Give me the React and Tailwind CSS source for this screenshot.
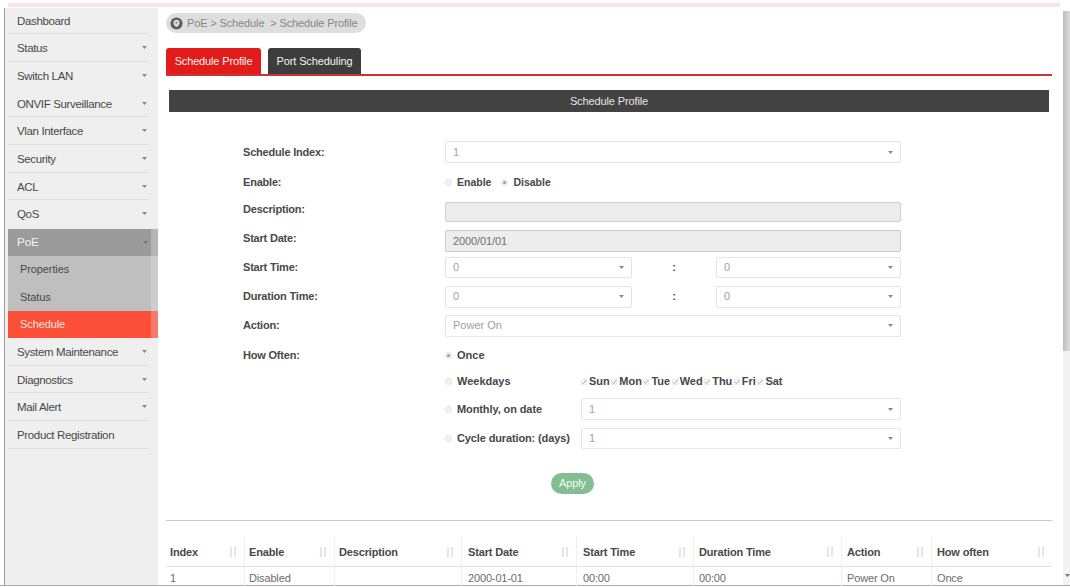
import React from "react";

const menu = [
  { label: "Dashboard", h: "h-[26px]", line: true },
  { label: "Status", h: "h-[28px]", caret: true, line: true },
  { label: "Switch LAN", h: "h-[28px]", caret: true },
  { label: "ONVIF Surveillance", h: "h-[27px]", caret: true, line: true },
  { label: "Vlan Interface", h: "h-[28px]", caret: true, line: true },
  { label: "Security", h: "h-[28px]", caret: true, line: true },
  { label: "ACL", h: "h-[27px]", caret: true, line: true },
  { label: "QoS", h: "h-[28px]", caret: true },
];

const menuAfter = [
  { label: "System Maintenance", h: "h-[28px]", caret: true, line: true },
  { label: "Diagnostics", h: "h-[27px]", caret: true, line: true },
  { label: "Mail Alert", h: "h-[28px]", caret: true, line: true },
  { label: "Product Registration", h: "h-[28px]", line: true },
];

const columns = [
  { label: "Index", value: "1", w: "w-[79px] pl-[4px]" },
  { label: "Enable", value: "Disabled", w: "w-[90px] pl-[4px]" },
  { label: "Description", value: "", w: "w-[127px] pl-[4px]" },
  { label: "Start Date", value: "2000-01-01", w: "w-[115px] pl-[6px]" },
  { label: "Start Time", value: "00:00", w: "w-[117px] pl-[6px]" },
  { label: "Duration Time", value: "00:00", w: "w-[148px] pl-[5px]" },
  { label: "Action", value: "Power On", w: "w-[90px] pl-[5px]" },
  { label: "How often", value: "Once", w: "w-[120px] pl-[5px]" },
];

function Caret({ className = "" }) {
  return (
    <svg className={`h-[3px] w-[5px] shrink-0 ${className}`} viewBox="0 0 5 3">
      <path d="M0 0h5L2.5 3z" fill="currentColor" />
    </svg>
  );
}

function MenuItem({ item }) {
  return (
    <div
      className={`mr-[9px] flex items-center justify-between border-b pl-[9px] pr-[2px] ${item.h} ${
        item.line ? "border-[#dedede]" : "border-transparent"
      }`}
    >
      <span className="pt-[3px] tracking-[-0.35px]">{item.label}</span>
      {item.caret && <Caret className="text-[#888]" />}
    </div>
  );
}

function Select({ value, className }) {
  return (
    <div
      className={`flex items-center justify-between rounded-[2px] border border-[#e4e4e4] bg-white pl-[7px] pr-[7px] text-[11px] text-[#a0a0a0] ${className}`}
    >
      <span>{value}</span>
      <Caret className="text-[#888]" />
    </div>
  );
}

function Radio({ checked }) {
  return (
    <span className="flex size-[7px] shrink-0 items-center justify-center rounded-full border border-[#e2e2e2] bg-[#f4f4f4]">
      {checked && <span className="size-[3px] rounded-full bg-[#999]" />}
    </span>
  );
}

function Check() {
  return (
    <svg className="size-[6px]" viewBox="0 0 6 6" fill="none">
      <rect x="0.5" y="0.5" width="5" height="5" stroke="#ececec" />
      <path d="M1 3.2l1.5 1.4L5.4 1" stroke="#999" strokeWidth="0.9" />
    </svg>
  );
}

function SortIcon() {
  return (
    <svg className="h-[10px] w-[8px] shrink-0" viewBox="0 0 8 10" fill="none" stroke="#cfcfcf">
      <path d="M2 0v9.500M0.800 8l1.200 1.500M6 10V0.500M6 0.500l1.300 1.500" />
    </svg>
  );
}

function Row({ label, h, labelClass = "", children }) {
  return (
    <div className={`flex items-center ${h}`}>
      <div className={`w-[202px] shrink-0 font-bold tracking-[-0.2px] ${labelClass}`}>{label}</div>
      <div className="flex w-[456px] items-center">{children}</div>
    </div>
  );
}

export default function App() {
  return (
    <div className="flex h-[587px] w-[1070px] flex-col overflow-hidden bg-white font-['Liberation_Sans',Arial,sans-serif] text-[11px] leading-none text-[#484848]">
      <div className="ml-[8px] mt-[3px] h-[4px] w-[1052px] shrink-0 bg-[#fce3e7]" />
      <div className="flex h-[579px] shrink-0 border-b border-[#aaa]">
        <aside className="ml-[4px] mt-[1px] w-[154px] shrink-0 border-l border-[#9a9a9a] bg-[#efefef] pl-[3px] text-[11.5px]">
          {menu.map((item) => (
            <MenuItem key={item.label} item={item} />
          ))}
          <div className="flex">
            <div className="flex-1">
              <div className="mt-px flex h-[27px] items-center justify-between bg-[#9b9b9b] pl-[9px] pr-[3px] text-[#f4f4f4]">
                <span>PoE</span>
                <Caret className="text-[#777]" />
              </div>
              <div className="flex h-[27px] items-center bg-[#bfbfbf] pl-[12px] text-[11px] tracking-[-0.1px]">Properties</div>
              <div className="flex h-[28px] items-center bg-[#bfbfbf] pl-[12px] text-[11px] tracking-[-0.1px]">Status</div>
              <div className="flex h-[27px] items-center bg-[#fc4f38] pl-[12px] text-[11px] tracking-[-0.1px] text-[#ffe3de]">Schedule</div>
            </div>
            <div className="mt-px flex w-[7px] flex-col">
              <div className="h-[27px] bg-[#b5b5b5]" />
              <div className="h-[55px] bg-[#cdcdcd]" />
              <div className="h-[27px] bg-[#f77b6b]" />
            </div>
          </div>
          {menuAfter.map((item) => (
            <MenuItem key={item.label} item={item} />
          ))}
        </aside>

        <main className="flex w-[904px] shrink-0 flex-col pl-[8px]">
          <div className="mt-[6px] flex h-[20px] w-[200px] shrink-0 items-center rounded-full bg-[#dedede] pl-[4px] text-[#868686]">
            <svg className="mr-[4px] size-[13px] shrink-0" viewBox="0 0 13 13" fill="none">
              <circle cx="6.500" cy="6.500" r="6" fill="#5a5a5a" />
              <path d="M3.500 4.200v2.300c0 1.500 1.300 2.300 3 3.700 1.700-1.400 3-2.200 3-3.700V4.200a4.500 4.500 0 0 0-6 0z" fill="#dadada" />
              <circle cx="6.500" cy="5.800" r="1" fill="#888" />
            </svg>
            <span className="whitespace-pre tracking-[-0.13px]">{"PoE > Schedule  > Schedule Profile"}</span>
          </div>

          <nav className="mt-[15px] flex h-[28px] w-[886px] shrink-0 items-end gap-[7px] border-b-2 border-[#c93636] text-[#f2f2f2]">
            <div className="flex h-[26px] w-[95px] items-center justify-center rounded-t-[3px] bg-[#e21b1b]">
              <span className="tracking-[-0.15px]">Schedule Profile</span>
            </div>
            <div className="flex h-[26px] w-[93px] items-center justify-center rounded-t-[3px] bg-[#3d3d3d] tracking-[-0.1px]">
              Port Scheduling
            </div>
          </nav>

          <div className="ml-[3px] mt-[14px] flex h-[22px] w-[880px] shrink-0 items-center justify-center bg-[#424242] tracking-[-0.12px] text-[#e6e6e6]">
            Schedule Profile
          </div>

          <form className="ml-[77px] mt-[25px] flex shrink-0 flex-col">
            <Row label="Schedule Index:" h="h-[30px]">
              <Select value="1" className="h-[22px] w-full" />
            </Row>
            <Row label="Enable:" h="h-[30px]">
              <div className="flex items-center text-[10.500px] font-bold">
                <Radio />
                <span className="ml-[5px] mr-[10px]">Enable</span>
                <Radio checked />
                <span className="ml-[5px]">Disable</span>
              </div>
            </Row>
            <Row label="Description:" h="h-[30px]" labelClass="pb-[5px]">
              <div className="h-[20px] w-full rounded-[2px] border border-[#cfcfcf] bg-[#ededed]" />
            </Row>
            <Row label="Start Date:" h="h-[28px]" labelClass="pb-[6px]">
              <div className="flex h-[22px] w-full items-center rounded-[2px] border border-[#cbcbcb] bg-[#ededed] pl-[7px] tracking-[-0.1px] text-[#707070]">
                2000/01/01
              </div>
            </Row>
            <Row label="Start Time:" h="h-[25px]">
              <Select value="0" className="h-[21px] w-[187px]" />
              <span className="w-[84px] text-center font-bold">:</span>
              <Select value="0" className="h-[21px] w-[185px]" />
            </Row>
            <Row label="Duration Time:" h="h-[33px]">
              <Select value="0" className="h-[22px] w-[187px]" />
              <span className="w-[84px] text-center font-bold">:</span>
              <Select value="0" className="h-[22px] w-[185px]" />
            </Row>
            <Row label="Action:" h="h-[25px]">
              <Select value="Power On" className="h-[22px] w-full" />
            </Row>
            <Row label="How Often:" h="h-[35px]">
              <Radio checked />
              <span className="ml-[5px] font-bold">Once</span>
            </Row>
            <Row label="" h="h-[17px]">
              <Radio />
              <span className="ml-[5px] w-[124px] font-bold">Weekdays</span>
              <div className="flex items-center gap-[1.5px] font-bold">
                {["Sun", "Mon", "Tue", "Wed", "Thu", "Fri", "Sat"].map((day) => (
                  <span key={day} className="flex items-center gap-[2px]">
                    <Check />
                    {day}
                  </span>
                ))}
              </div>
            </Row>
            <Row label="" h="h-[38px]">
              <Radio />
              <span className="ml-[5px] w-[124px] font-bold tracking-[-0.1px]">Monthly, on date</span>
              <Select value="1" className="h-[22px] w-[320px]" />
            </Row>
            <Row label="" h="h-[21px]">
              <Radio />
              <span className="ml-[5px] w-[124px] whitespace-nowrap font-bold tracking-[-0.13px]">Cycle duration: (days)</span>
              <Select value="1" className="h-[21px] w-[320px]" />
            </Row>
          </form>

          <button className="ml-[385px] mt-[24px] flex h-[21px] w-[43px] shrink-0 items-center justify-center rounded-full bg-[#85bd92] tracking-[-0.15px] text-[#effff2]">
            Apply
          </button>

          <div className="mt-[26px] h-px w-[886px] shrink-0 bg-[#c9c9c9]" />

          <div className="mt-[15px] w-[886px] tracking-[-0.15px]">
            <div className="flex h-[31px] border-b border-[#e2e2e2]">
              {columns.map((c) => (
                <div
                  key={c.label}
                  className={`flex shrink-0 items-center justify-between border-r border-[#f1f1f1] pr-[7px] pt-[2px] font-bold last:border-r-0 ${c.w}`}
                >
                  <span className="whitespace-nowrap">{c.label}</span>
                  <SortIcon />
                </div>
              ))}
            </div>
            <div className="flex h-[19px]">
              {columns.map((c) => (
                <div
                  key={c.label}
                  className={`flex shrink-0 items-center whitespace-nowrap border-r border-[#f1f1f1] pt-[4px] text-[#6c6c6c] last:border-r-0 ${c.w}`}
                >
                  {c.value}
                </div>
              ))}
            </div>
          </div>
        </main>

        <div className="flex w-[8px] flex-col pl-px">
          <div className="mt-[4px] h-[340px] bg-gradient-to-r from-[#bdbdbd] to-[#dcdcdc]" />
          <div className="flex flex-1 items-end justify-end bg-[#f3f3f3] pb-[8px]">
            <Caret className="text-[#777]" />
          </div>
        </div>
      </div>
    </div>
  );
}
